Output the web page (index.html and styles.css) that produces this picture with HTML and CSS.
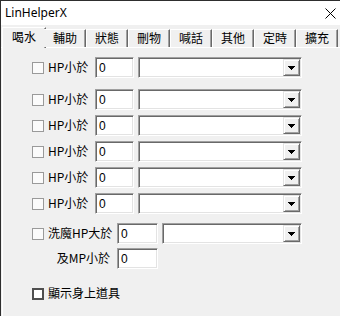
FILE: index.html
```html
<!DOCTYPE html>
<html>
<head>
<meta charset="utf-8">
<link rel="stylesheet" href="styles.css">
</head>
<body>
<div class="window">
  <div class="titlebar">
    <span class="title">LinHelperX</span>
    <svg class="close" width="11" height="11" viewBox="0 0 11 11"><path d="M0.5 0.5 L10.5 10.5 M10.5 0.5 L0.5 10.5" stroke="#000" stroke-width="1" fill="none"/></svg>
  </div>
  <div class="tabbar">
    <div class="tab active">喝水</div>
    <div class="tab">輔助</div>
    <div class="tab">狀態</div>
    <div class="tab">刪物</div>
    <div class="tab">喊話</div>
    <div class="tab">其他</div>
    <div class="tab">定時</div>
    <div class="tab">擴充</div>
  </div>
  <div class="panel">
    <div class="row r1">
      <span class="cb"></span><span class="lbl">HP小於</span>
      <span class="edit sunken">0</span>
      <span class="combo sunken"><span class="field"></span><span class="btn"><svg width="7" height="4" viewBox="0 0 7 4"><path d="M0 0H7V1H6V2H5V3H4V4H3V3H2V2H1V1H0Z" fill="#000"/></svg></span></span>
    </div>
    <div class="row r2">
      <span class="cb"></span><span class="lbl">HP小於</span>
      <span class="edit sunken">0</span>
      <span class="combo sunken"><span class="field"></span><span class="btn"><svg width="7" height="4" viewBox="0 0 7 4"><path d="M0 0H7V1H6V2H5V3H4V4H3V3H2V2H1V1H0Z" fill="#000"/></svg></span></span>
    </div>
    <div class="row rn">
      <span class="cb"></span><span class="lbl">HP小於</span>
      <span class="edit sunken">0</span>
      <span class="combo sunken"><span class="field"></span><span class="btn"><svg width="7" height="4" viewBox="0 0 7 4"><path d="M0 0H7V1H6V2H5V3H4V4H3V3H2V2H1V1H0Z" fill="#000"/></svg></span></span>
    </div>
    <div class="row rn">
      <span class="cb"></span><span class="lbl">HP小於</span>
      <span class="edit sunken">0</span>
      <span class="combo sunken"><span class="field"></span><span class="btn"><svg width="7" height="4" viewBox="0 0 7 4"><path d="M0 0H7V1H6V2H5V3H4V4H3V3H2V2H1V1H0Z" fill="#000"/></svg></span></span>
    </div>
    <div class="row rn">
      <span class="cb"></span><span class="lbl">HP小於</span>
      <span class="edit sunken">0</span>
      <span class="combo sunken"><span class="field"></span><span class="btn"><svg width="7" height="4" viewBox="0 0 7 4"><path d="M0 0H7V1H6V2H5V3H4V4H3V3H2V2H1V1H0Z" fill="#000"/></svg></span></span>
    </div>
    <div class="row rn">
      <span class="cb"></span><span class="lbl">HP小於</span>
      <span class="edit sunken">0</span>
      <span class="combo sunken"><span class="field"></span><span class="btn"><svg width="7" height="4" viewBox="0 0 7 4"><path d="M0 0H7V1H6V2H5V3H4V4H3V3H2V2H1V1H0Z" fill="#000"/></svg></span></span>
    </div>
    <div class="row r7">
      <span class="cb"></span><span class="lbl wide">洗魔HP大於</span>
      <span class="edit wide sunken">0</span>
      <span class="combo short sunken"><span class="field"></span><span class="btn"><svg width="7" height="4" viewBox="0 0 7 4"><path d="M0 0H7V1H6V2H5V3H4V4H3V3H2V2H1V1H0Z" fill="#000"/></svg></span></span>
    </div>
    <div class="row r8">
      <span class="lbl wide right">及MP小於</span>
      <span class="edit wide sunken">0</span>
    </div>
    <div class="row r9">
      <span class="cb dark"></span><span class="lbl">顯示身上道具</span>
    </div>
  </div>
</div>
</body>
</html>
```
FILE: styles.css
```css
html, body {
  margin: 0;
  padding: 0;
}
body {
  background: #f0f0f0;
  font-family: "Noto Sans CJK TC", "Noto Sans", sans-serif;
  font-size: 12px;
  color: #000;
}
.window {
  width: 340px;
  height: 316px;
  box-sizing: border-box;
  border-left: 1px solid #2e2e2e;
  border-top: 1px solid #2e2e2e;
  overflow: hidden;
  background: #f0f0f0;
}
.titlebar {
  height: 24px;
  background: #fff;
  display: flex;
  align-items: center;
  justify-content: space-between;
  padding: 0 4px 0 4px;
}
.title {
  font-family: "Noto Sans", sans-serif;
  font-size: 12px;
  line-height: 24px;
}
.close {
  display: block;
  margin-top: 1px;
}
.tabbar {
  display: flex;
  align-items: flex-end;
  height: 22px;
  padding-left: 1px;
  border-bottom: 1px solid #fff;
}
.tab {
  box-sizing: border-box;
  width: 42px;
  height: 18px;
  border-top: 1px solid #fff;
  border-left: 1px solid #fff;
  border-right: 1px solid #696969;
  box-shadow: inset -1px 0 0 #a0a0a0;
  background: #f0f0f0;
  text-align: center;
  line-height: 16px;
  font-size: 12px;
}
.tab.active {
  width: 44px;
  height: 21px;
  margin-bottom: -1px;
  margin-right: -2px;
  line-height: 17px;
}
.tab.active + .tab {
  border-left-color: #f0f0f0;
}
.panel {
  margin-left: 1px;
  border-left: 1px solid #fff;
  padding-top: 9px;
  height: 300px;
}
.row {
  display: flex;
  align-items: center;
  height: 21px;
  padding-left: 29px;
}
.r2 { margin-top: 11px; }
.rn { margin-top: 5px; }
.r7 { margin-top: 9px; }
.r8 { margin-top: 4px; padding-left: 45px; }
.r9 { margin-top: 14px; }
.cb {
  box-sizing: border-box;
  width: 12px;
  height: 12px;
  border: 1px solid #9a9a9a;
  background: #fbfbfb;
  margin-right: 4px;
  flex: none;
}
.cb.dark {
  border: 2px solid #4f4f4f;
  background: #fff;
}
.lbl {
  width: 47px;
  white-space: nowrap;
  line-height: 16px;
  margin-top: -2px;
}
.lbl.wide { width: 69px; }
.lbl.right {
  text-align: right;
  box-sizing: border-box;
  padding-right: 7px;
}
.sunken {
  box-sizing: border-box;
  border: 1px solid;
  border-color: #a0a0a0 #fff #fff #a0a0a0;
  box-shadow: inset 1px 1px 0 #696969, inset -1px -1px 0 #e3e3e3;
  background: #fff;
  height: 21px;
}
.edit {
  width: 39px;
  margin-right: 4px;
  padding-left: 3px;
  font-family: "Liberation Sans", sans-serif;
  font-size: 12px;
  line-height: 18px;
  padding-top: 1px;
}
.edit.wide { width: 41px; }
.combo {
  width: 164px;
  display: flex;
  padding: 1px;
}
.combo.short { width: 140px; }
.field {
  flex: 1;
}
.btn {
  box-sizing: border-box;
  width: 17px;
  height: 17px;
  background: #f0f0f0;
  border: 1px solid;
  border-color: #e3e3e3 #696969 #696969 #e3e3e3;
  box-shadow: inset 1px 1px 0 #fff, inset -1px -1px 0 #a0a0a0;
  display: flex;
  align-items: center;
  justify-content: center;
}
.btn svg {
  display: block;
  margin-top: 1px;
}
```
